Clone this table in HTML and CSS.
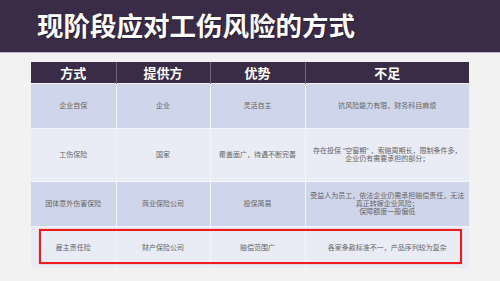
FILE: index.html
```html
<!DOCTYPE html>
<html lang="zh">
<head>
<meta charset="utf-8">
<link rel="stylesheet" href="styles.css">
</head>
<body>
<header class="topbar">
  <h1 class="title">现阶段应对工伤风险的方式</h1>
</header>
<div class="wrap">
  <table class="grid">
    <colgroup>
      <col class="c1"><col class="c2"><col class="c3"><col class="c4">
    </colgroup>
    <thead>
      <tr class="head"><th>方式</th><th>提供方</th><th>优势</th><th>不足</th></tr>
    </thead>
    <tbody>
      <tr class="r1 dark"><td>企业自保</td><td>企业</td><td>灵活自主</td><td>抗风险能力有限，财务科目麻烦</td></tr>
      <tr class="r2 light"><td>工伤保险</td><td>国家</td><td>覆盖面广，待遇不断完善</td><td>存在投保 “空窗期” ，索赔周期长，限制条件多，<br>企业仍有需要承担的部分；</td></tr>
      <tr class="r3 dark"><td>团体意外伤害保险</td><td>商业保险公司</td><td>投保简易</td><td>受益人为员工，依法企业仍需承担赔偿责任，无法<br>真正转嫁企业风险；<br>保障额度一般偏低</td></tr>
      <tr class="r4 light"><td>雇主责任险</td><td>财产保险公司</td><td>赔偿范围广</td><td>各家条款标准不一，产品序列较为复杂</td></tr>
    </tbody>
  </table>
  <div class="highlight"></div>
</div>
</body>
</html>
```
FILE: styles.css
```css
html, body {
  margin: 0;
  padding: 0;
}
body {
  background: #f2f2f2;
  width: 500px;
  height: 281px;
  overflow: hidden;
  font-family: "Noto Sans CJK SC", "Noto Sans", sans-serif;
}
.topbar {
  height: 52px;
  background: #3a2c47;
  border-bottom: 1px solid #bdb3c8;
  display: flex;
  align-items: center;
  padding-left: 37px;
}
.title {
  margin: 0;
  color: #ffffff;
  font-size: 26.5px;
  font-weight: 700;
  line-height: 1;
  letter-spacing: 0;
  text-shadow: 1px 1px 1px rgba(0,0,0,0.35);
  position: relative;
  top: -1px;
}
.wrap {
  position: relative;
  margin: 9px 0 0 31px;
  width: 438px;
}
.grid {
  width: 438px;
  border-collapse: collapse;
  table-layout: fixed;
}
.c1 { width: 85px; }
.c2 { width: 94px; }
.c3 { width: 95px; }
.c4 { width: 164px; }
.grid th, .grid td {
  padding: 0 4px;
  text-align: center;
  vertical-align: middle;
}
.head th {
  height: 21px;
  background: #3a2c47;
  color: #ffffff;
  font-size: 13px;
  font-weight: 700;
  line-height: 1;
  border-left: 1px solid #6e6079;
}
.head th:first-child { border-left: none; }
.grid td {
  font-family: "Liberation Sans", "Noto Sans CJK SC", sans-serif;
  font-size: 7px;
  line-height: 8px;
  color: #666666;
  border-left: 1px solid #f3f4fa;
  border-top: 1px solid #f3f4fa;
}
.grid td:first-child { border-left: none; }
.dark td { background: #cfd5ea; }
.light td { background: #e9ebf5; }
.r1 td { height: 44px; }
.r2 td { height: 52px; }
.r3 td { height: 44px; }
.r4 td { height: 41px; }
.highlight {
  position: absolute;
  left: 8px;
  top: 167px;
  width: 419px;
  height: 31px;
  border: 2px solid #ee1c1c;
  box-shadow: 0 0 1px rgba(238,28,28,0.5);
}
```
